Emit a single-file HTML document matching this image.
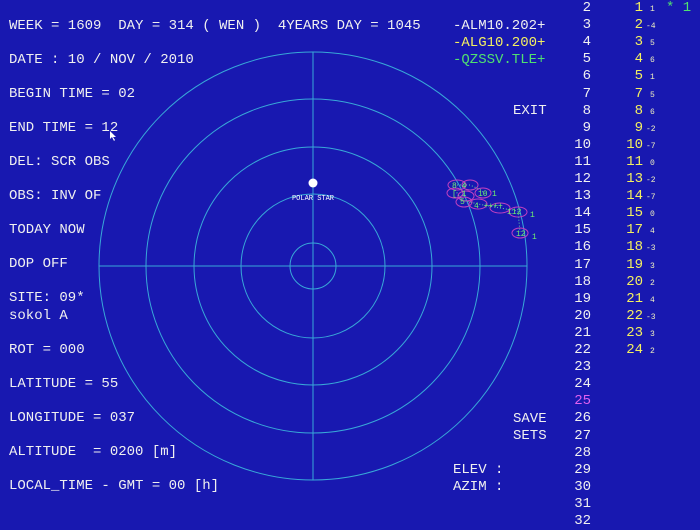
<!DOCTYPE html>
<html><head><meta charset="utf-8"><style>
body{margin:0;width:700px;height:530px;background:#1818b0;overflow:hidden;position:relative;font-family:"Liberation Mono","DejaVu Sans Mono",monospace;font-size:14px;color:#f0f0f0}
.t{position:absolute;white-space:pre;line-height:16px}
.y{color:#f4f060}.g{color:#50e070}.m{color:#e060f0}
.s{font-size:8px;color:#f0f0c0}
.n{position:absolute;width:28px;text-align:right;line-height:16px}
.r{position:absolute;width:36px;text-align:right;line-height:16px;color:#f4f060}
.sm{position:absolute;font-size:8px;line-height:16px;color:#f0f0c0;white-space:pre}
</style></head><body>
<svg width="700" height="530" style="position:absolute;left:0;top:0">
<g fill="none" stroke="#38a8d8" stroke-width="1">
<circle cx="313" cy="266" r="214"/>
<circle cx="313" cy="266" r="167"/>
<circle cx="313" cy="266" r="119"/>
<circle cx="313" cy="266" r="72"/>
<circle cx="313" cy="266" r="23"/>
<line x1="99" y1="266" x2="527" y2="266"/>
<line x1="313" y1="52" x2="313" y2="480"/>
</g>
<circle cx="313" cy="183" r="4.5" fill="#fff"/>
<text x="313" y="200" fill="#fff" font-size="7" text-anchor="middle" font-family="Liberation Mono">POLAR STAR</text>
<g fill="none" stroke="#c040c0" stroke-width="1">
<ellipse cx="457" cy="185" rx="9" ry="5"/><ellipse cx="470" cy="185" rx="8" ry="5"/>
<ellipse cx="455" cy="193" rx="8" ry="5"/><ellipse cx="466" cy="196" rx="8" ry="5"/>
<ellipse cx="464" cy="202" rx="8" ry="5"/><ellipse cx="478" cy="204" rx="9" ry="5"/>
<ellipse cx="483" cy="193" rx="8" ry="5"/><ellipse cx="500" cy="208" rx="10" ry="5"/>
<ellipse cx="518" cy="212" rx="9" ry="5"/><ellipse cx="520" cy="233" rx="8" ry="5"/>
</g>
<g stroke="#60d0a0" stroke-dasharray="1,2" fill="none">
<path d="M457 185 L470 185 L481 190 L485 194 M455 190 L462 200 L478 204 L500 208 L518 211 L520 232"/>
</g>
<g fill="#70f070" font-size="8" font-family="Liberation Mono">
<text x="452" y="188">8 4</text><text x="478" y="196">10</text><text x="492" y="196">1</text>
<text x="452" y="196">[ 1</text><text x="460" y="204">5</text><text x="474" y="208">4 ++++</text>
<text x="507" y="214">112</text><text x="530" y="217">1</text>
<text x="516" y="236">12</text><text x="532" y="239">1</text>
</g>
<path d="M110 131 l0 8 l2 -2 l2 4 l1 -1 l-2 -3 l3 0 z" fill="#fff"/>
</svg>
<div class="t" style="left:9px;top:18px">WEEK = 1609  DAY = 314 ( WEN )  4YEARS DAY = 1045</div>
<div class="t" style="left:9px;top:52px">DATE : 10 / NOV / 2010</div>
<div class="t" style="left:9px;top:86px">BEGIN TIME = 02</div>
<div class="t" style="left:9px;top:120px">END TIME = 12</div>
<div class="t" style="left:9px;top:154px">DEL: SCR OBS</div>
<div class="t" style="left:9px;top:188px">OBS: INV OF</div>
<div class="t" style="left:9px;top:222px">TODAY NOW</div>
<div class="t" style="left:9px;top:256px">DOP OFF</div>
<div class="t" style="left:9px;top:290px">SITE: 09*</div>
<div class="t" style="left:9px;top:308px">sokol A</div>
<div class="t" style="left:9px;top:342px">ROT = 000</div>
<div class="t" style="left:9px;top:376px">LATITUDE = 55</div>
<div class="t" style="left:9px;top:410px">LONGITUDE = 037</div>
<div class="t" style="left:9px;top:444px">ALTITUDE  = 0200 [m]</div>
<div class="t" style="left:9px;top:478px">LOCAL_TIME - GMT = 00 [h]</div>
<div class="t" style="left:453px;top:18px">-ALM10.202+</div>
<div class="t y" style="left:453px;top:35px">-ALG10.200+</div>
<div class="t g" style="left:453px;top:52px">-QZSSV.TLE+</div>
<div class="t" style="left:513px;top:103px">EXIT</div>
<div class="t" style="left:513px;top:411px">SAVE</div>
<div class="t" style="left:513px;top:428px">SETS</div>
<div class="t" style="left:453px;top:462px">ELEV :</div>
<div class="t" style="left:453px;top:479px">AZIM :</div>
<div class="t g" style="left:666px;top:0px">* 1</div>
<div id="c"></div>
<script>
var h='';
for(var i=2;i<=32;i++){var y=Math.round(0+(i-2)*17.1);h+='<div class="n'+(i==25?' m':'')+'" style="left:563px;top:'+y+'px">'+i+'</div>';}
var ys=[[1,'1'],[2,'-4'],[3,'5'],[4,'6'],[5,'1'],[7,'5'],[8,'6'],[9,'-2'],[10,'-7'],[11,'0'],[13,'-2'],[14,'-7'],[15,'0'],[17,'4'],[18,'-3'],[19,'3'],[20,'2'],[21,'4'],[22,'-3'],[23,'3'],[24,'2']];
for(var j=0;j<ys.length;j++){var y=Math.round(j*17.1);h+='<div class="r" style="left:607px;top:'+y+'px">'+ys[j][0]+'</div><div class="sm" style="left:'+(ys[j][1].length>1?646:650)+'px;top:'+(y+2)+'px">'+ys[j][1]+'</div>';}
document.getElementById('c').innerHTML=h;
</script>
</body></html>
